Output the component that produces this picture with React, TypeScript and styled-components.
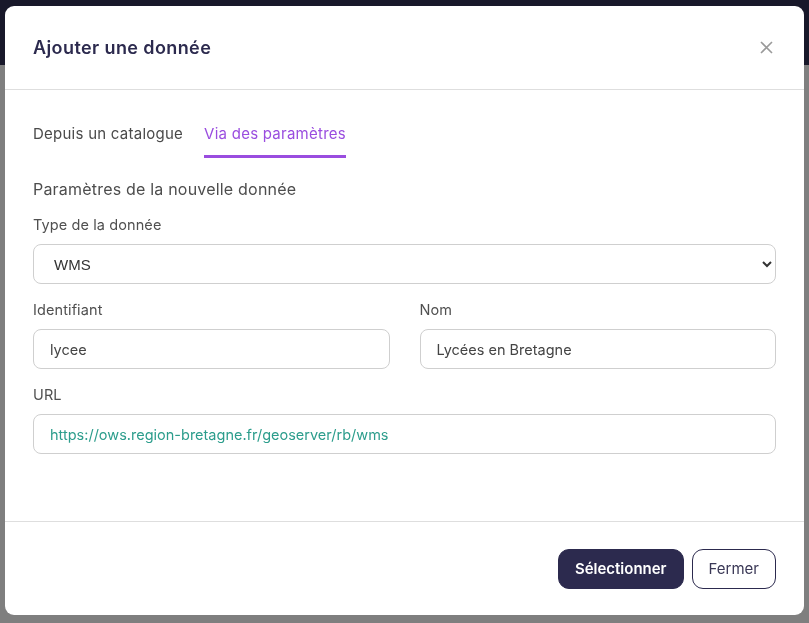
import { useState } from 'react';
import styled, { createGlobalStyle } from 'styled-components';

const GlobalStyle = createGlobalStyle`
  html, body {
    margin: 0;
    padding: 0;
    height: 100%;
  }
  body {
    font-family: Inter, 'Noto Sans', sans-serif;
    background: #ffffff;
  }
  * {
    box-sizing: border-box;
  }
`;

const Page = styled.div`
  height: 623px;
  display: flex;
  flex-direction: column;
`;

const TopBar = styled.div`
  height: 65px;
  background: #303054;
`;

const PageBody = styled.div`
  flex: 1;
  background: #ffffff;
`;

const Overlay = styled.div`
  position: fixed;
  inset: 0;
  background: rgba(0, 0, 0, 0.5);
  display: flex;
  align-items: flex-start;
  justify-content: flex-start;
  padding: 6px 0 0 5px;
`;

const Dialog = styled.div`
  width: 799px;
  height: 609px;
  background: #ffffff;
  border-radius: 9px;
  display: flex;
  flex-direction: column;
  overflow: hidden;
`;

const Header = styled.div`
  height: 84px;
  padding: 0 28px;
  display: flex;
  align-items: center;
  justify-content: space-between;
  border-bottom: 1px solid #dedede;
`;

const Title = styled.h2`
  margin: 0;
  font-size: 18px;
  font-weight: 600;
  color: #2c2a4e;
  letter-spacing: 0.4px;
`;

const CloseButton = styled.button`
  border: none;
  background: none;
  padding: 0;
  margin-right: 2px;
  width: 16px;
  height: 16px;
  display: flex;
  align-items: center;
  justify-content: center;
  cursor: pointer;
`;

const Body = styled.div`
  flex: 1;
  padding: 34px 28px 0;
`;

const Tabs = styled.div`
  display: flex;
  gap: 21px;
`;

const Tab = styled.button<{ $active?: boolean }>`
  border: none;
  background: none;
  padding: 0 0 12px;
  font-family: inherit;
  font-size: 15px;
  letter-spacing: 0.25px;
  color: ${(p) => (p.$active ? '#9a4ddf' : '#4a4a4a')};
  border-bottom: 3px solid ${(p) => (p.$active ? '#9a4ddf' : 'transparent')};
  cursor: pointer;
`;

const SectionTitle = styled.div`
  margin-top: 21px;
  font-size: 16px;
  letter-spacing: 0.2px;
  color: #4d4d4d;
`;

const Field = styled.div<{ $first?: boolean }>`
  display: flex;
  flex-direction: column;
  gap: 11px;
  margin-top: 17px;
`;

const Label = styled.label`
  font-size: 14.5px;
  letter-spacing: 0.1px;
  color: #505050;
`;

const Row = styled.div`
  display: grid;
  grid-template-columns: 1fr 1fr;
  column-gap: 30px;
`;

const Select = styled.select`
  height: 40px;
  border: 1px solid #cfcfcf;
  border-radius: 8px;
  padding: 0 6px 0 16px;
  font-family: 'Liberation Sans', Arial, sans-serif;
  font-size: 15px;
  color: #333;
  background: #fff;
`;

const Input = styled.input<{ $link?: boolean }>`
  height: 40px;
  border: 1px solid #cfcfcf;
  border-radius: 8px;
  padding: 0 16px;
  font-family: inherit;
  font-size: 14.5px;
  color: ${(p) => (p.$link ? '#2c9d8c' : '#444')};
  outline: none;
`;

const Footer = styled.div`
  height: 94px;
  border-top: 1px solid #dedede;
  padding: 0 28px 0;
  display: flex;
  align-items: center;
  justify-content: flex-end;
  gap: 8px;
`;

const Button = styled.button<{ $primary?: boolean }>`
  height: 40px;
  padding: 0 16px;
  border-radius: 11px;
  font-family: inherit;
  font-size: 15px;
  font-weight: ${(p) => (p.$primary ? 600 : 400)};
  border: 1px solid #2c2a4e;
  background: ${(p) => (p.$primary ? '#2c2a4e' : '#ffffff')};
  color: ${(p) => (p.$primary ? '#ffffff' : '#3a3856')};
  cursor: pointer;
`;

const App = () => {
  const [tab, setTab] = useState(1);
  return (
    <>
      <GlobalStyle />
      <Page>
        <TopBar />
        <PageBody />
      </Page>
      <Overlay>
        <Dialog>
          <Header>
            <Title>Ajouter une donnée</Title>
            <CloseButton aria-label="Fermer">
              <svg width="13" height="13" viewBox="0 0 13 13">
                <path d="M1 1L12 12M12 1L1 12" stroke="#9a9a9a" strokeWidth="1.6" />
              </svg>
            </CloseButton>
          </Header>
          <Body>
            <Tabs>
              <Tab $active={tab === 0} onClick={() => setTab(0)}>
                Depuis un catalogue
              </Tab>
              <Tab $active={tab === 1} onClick={() => setTab(1)}>
                Via des paramètres
              </Tab>
            </Tabs>
            <SectionTitle>Paramètres de la nouvelle donnée</SectionTitle>
            <Field>
              <Label>Type de la donnée</Label>
              <Select defaultValue="WMS">
                <option>WMS</option>
                <option>WFS</option>
              </Select>
            </Field>
            <Row>
              <Field>
                <Label>Identifiant</Label>
                <Input defaultValue="lycee" />
              </Field>
              <Field>
                <Label>Nom</Label>
                <Input defaultValue="Lycées en Bretagne" />
              </Field>
            </Row>
            <Field>
              <Label>URL</Label>
              <Input $link defaultValue="https://ows.region-bretagne.fr/geoserver/rb/wms" />
            </Field>
          </Body>
          <Footer>
            <Button $primary>Sélectionner</Button>
            <Button>Fermer</Button>
          </Footer>
        </Dialog>
      </Overlay>
    </>
  );
};

export default App;
